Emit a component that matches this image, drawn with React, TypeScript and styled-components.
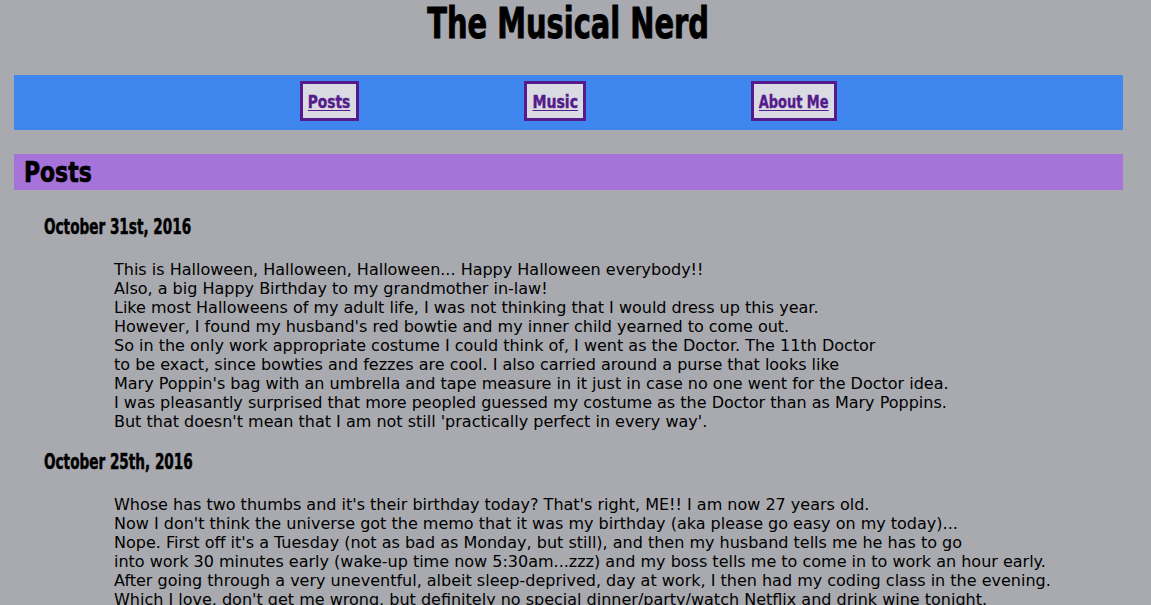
import React from "react";
import styled, { createGlobalStyle } from "styled-components";

const Global = createGlobalStyle`
  html, body { margin: 0; padding: 0; background: #a9aaaf; }
  body { font-family: "DejaVu Sans", Verdana, sans-serif; }
`;

const headFont = `"Liberation Sans Narrow", "DejaVu Sans Condensed", "DejaVu Sans", sans-serif`;

const Page = styled.div`
  padding: 0 28px 0 14px;
`;

const Squeeze = styled.span<{ $k: number; $origin?: string; $stroke?: number }>`
  display: inline-block;
  transform: scaleX(${(p) => p.$k});
  transform-origin: ${(p) => p.$origin ?? "left"} center;
  -webkit-text-stroke: ${(p) => p.$stroke ?? 0}px currentColor;
`;

const Title = styled.h1`
  margin: 0;
  text-align: center;
  font-family: ${headFont};
  font-weight: 700;
  font-size: 42px;
  line-height: 48px;
  color: #000;
`;

const Nav = styled.nav`
  margin-top: 27px;
  background: #3f86ee;
  height: 55px;
  box-sizing: border-box;
  padding-top: 6px;
  display: flex;
  justify-content: center;
  align-items: flex-start;
  gap: 165px;
`;

const NavButton = styled.a<{ $w: number }>`
  box-sizing: border-box;
  width: ${(p) => p.$w}px;
  height: 40px;
  border: 3px solid #551a8b;
  background: #dadae2;
  color: #551a8b;
  display: flex;
  align-items: center;
  justify-content: center;
  font-family: ${headFont};
  font-weight: 700;
  font-size: 18px;
  text-decoration: underline;
  text-underline-offset: 2px;
  white-space: nowrap;
`;

const SectionBar = styled.h2`
  margin: 24px 0 0;
  background: #a673db;
  height: 36px;
  padding-left: 10px;
  font-family: ${headFont};
  font-weight: 700;
  font-size: 29px;
  line-height: 36px;
  color: #000;
`;

const Posts = styled.section`
  display: flex;
  flex-direction: column;
  gap: 19px;
  margin-top: 25px;
`;

const Post = styled.article`
  display: flex;
  flex-direction: column;
  gap: 21px;
`;

const DateHead = styled.h3`
  margin: 0;
  padding-left: 30px;
  font-family: ${headFont};
  font-weight: 700;
  font-size: 21px;
  line-height: 24px;
  color: #000;
`;

const Body = styled.p`
  margin: 0;
  padding-left: 100px;
  font-size: 16px;
  line-height: 19px;
  color: #000;
  white-space: nowrap;
`;

const navItems = [
  { label: "Posts", w: 59, k: 0.85 },
  { label: "Music", w: 62, k: 0.87 },
  { label: "About Me", w: 86, k: 0.8 },
];

const posts = [
  {
    date: "October 31st, 2016",
    lines: [
      "This is Halloween, Halloween, Halloween... Happy Halloween everybody!!",
      "Also, a big Happy Birthday to my grandmother in-law!",
      "Like most Halloweens of my adult life, I was not thinking that I would dress up this year.",
      "However, I found my husband's red bowtie and my inner child yearned to come out.",
      "So in the only work appropriate costume I could think of, I went as the Doctor. The 11th Doctor",
      "to be exact, since bowties and fezzes are cool. I also carried around a purse that looks like",
      "Mary Poppin's bag with an umbrella and tape measure in it just in case no one went for the Doctor idea.",
      "I was pleasantly surprised that more peopled guessed my costume as the Doctor than as Mary Poppins.",
      "But that doesn't mean that I am not still 'practically perfect in every way'.",
    ],
  },
  {
    date: "October 25th, 2016",
    lines: [
      "Whose has two thumbs and it's their birthday today? That's right, ME!! I am now 27 years old.",
      "Now I don't think the universe got the memo that it was my birthday (aka please go easy on my today)...",
      "Nope. First off it's a Tuesday (not as bad as Monday, but still), and then my husband tells me he has to go",
      "into work 30 minutes early (wake-up time now 5:30am...zzz) and my boss tells me to come in to work an hour early.",
      "After going through a very uneventful, albeit sleep-deprived, day at work, I then had my coding class in the evening.",
      "Which I love, don't get me wrong, but definitely no special dinner/party/watch Netflix and drink wine tonight.",
    ],
  },
];

export default function App() {
  return (
    <>
      <Global />
      <Page>
        <Title>
          <Squeeze $k={0.765} $origin="center" $stroke={0.9}>The Musical Nerd</Squeeze>
        </Title>
        <Nav>
          {navItems.map((n) => (
            <NavButton key={n.label} href="#" $w={n.w}>
              <Squeeze $k={n.k} $origin="center" $stroke={0.4}>{n.label}</Squeeze>
            </NavButton>
          ))}
        </Nav>
        <SectionBar>
          <Squeeze $k={0.84} $stroke={0.7}>Posts</Squeeze>
        </SectionBar>
        <Posts>
          {posts.map((p) => (
            <Post key={p.date}>
              <DateHead>
                <Squeeze $k={0.72} $stroke={0.5}>{p.date}</Squeeze>
              </DateHead>
              <Body>
                {p.lines.map((l, i) => (
                  <React.Fragment key={i}>
                    {l}
                    {i < p.lines.length - 1 && <br />}
                  </React.Fragment>
                ))}
              </Body>
            </Post>
          ))}
        </Posts>
      </Page>
    </>
  );
}
